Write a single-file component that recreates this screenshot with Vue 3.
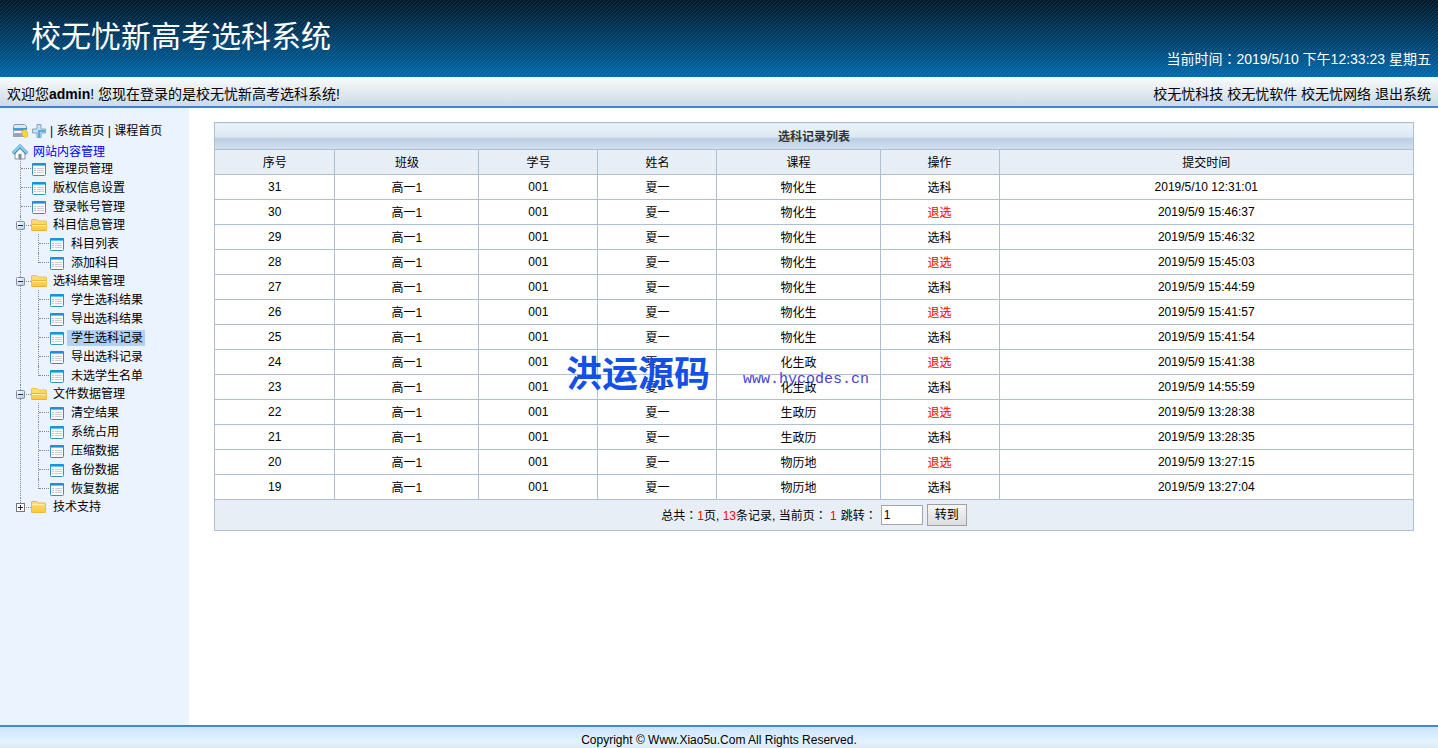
<script setup>
import { ref } from 'vue'

const pageNo = ref('1')

const tree = [
  { text: '管理员管理' },
  { text: '版权信息设置' },
  { text: '登录帐号管理' },
  { text: '科目信息管理', open: true, children: ['科目列表', '添加科目'] },
  { text: '选科结果管理', open: true, children: ['学生选科结果', '导出选科结果', '学生选科记录', '导出选科记录', '未选学生名单'] },
  { text: '文件数据管理', open: true, children: ['清空结果', '系统占用', '压缩数据', '备份数据', '恢复数据'] },
  { text: '技术支持', open: false, children: [] },
]
const selected = ref('学生选科记录')

const columns = ['序号', '班级', '学号', '姓名', '课程', '操作', '提交时间']
const rows = [
  [31, '物化生', '选科', '2019/5/10 12:31:01'],
  [30, '物化生', '退选', '2019/5/9 15:46:37'],
  [29, '物化生', '选科', '2019/5/9 15:46:32'],
  [28, '物化生', '退选', '2019/5/9 15:45:03'],
  [27, '物化生', '选科', '2019/5/9 15:44:59'],
  [26, '物化生', '退选', '2019/5/9 15:41:57'],
  [25, '物化生', '选科', '2019/5/9 15:41:54'],
  [24, '化生政', '退选', '2019/5/9 15:41:38'],
  [23, '化生政', '选科', '2019/5/9 14:55:59'],
  [22, '生政历', '退选', '2019/5/9 13:28:38'],
  [21, '生政历', '选科', '2019/5/9 13:28:35'],
  [20, '物历地', '退选', '2019/5/9 13:27:15'],
  [19, '物历地', '选科', '2019/5/9 13:27:04'],
]
</script>

<template>
  <div class="page">
    <svg class="defs" width="0" height="0" aria-hidden="true">
      <defs>
        <linearGradient id="gFolder" x1="0" y1="0" x2="0" y2="1">
          <stop offset="0" stop-color="#ffe27a" />
          <stop offset="1" stop-color="#fbc83c" />
        </linearGradient>
        <linearGradient id="gBox" x1="0" y1="0" x2="1" y2="1">
          <stop offset="0" stop-color="#ffffff" />
          <stop offset="1" stop-color="#b9c4d6" />
        </linearGradient>
        <symbol id="iPage" viewBox="0 0 16 16">
          <rect x="1.5" y="2.5" width="13" height="12" rx="1" fill="#fbfdfe" stroke="#3b8fb4" />
          <path d="M1 4V3q0-1 1-1h12q1 0 1 1v2H1z" fill="#1f8fd6" />
          <path d="M2 4.500h12" stroke="#5cc8f6" />
          <path d="M3 7.500h2M3 9.500h2M3 11.500h2" stroke="#b9c6dc" />
          <path d="M6 7.500h7M6 9.500h7M6 11.500h7" stroke="#cfcbd0" />
        </symbol>
        <symbol id="iFolderOpen" viewBox="0 0 16 16">
          <path d="M.5 3q0-.5.5-.5h5l1.500 1.500H15q.5 0 .5.5v9H.5z" fill="url(#gFolder)" stroke="#f0c24a" />
          <path d="M1 8.500h14" stroke="#fff0ae" />
          <path d="M1 7.500h14" stroke="#eab83a" />
          <path d="M1 13.500h14" stroke="#eaae38" />
        </symbol>
        <symbol id="iFolder" viewBox="0 0 16 16">
          <path d="M.5 3q0-.5.5-.5h5l1.500 1.500H14q.5 0 .5.5v9H.5z" fill="url(#gFolder)" stroke="#f0b848" />
          <path d="M1.500 5.500h12" stroke="#fff0ae" />
        </symbol>
      </defs>
    </svg>

    <header class="banner">
      <h1>校无忧新高考选科系统</h1>
      <p class="clock">当前时间<span class="mid">：</span>2019/5/10 下午12:33:23 星期五</p>
    </header>

    <div class="userbar">
      <p>欢迎您<b>admin</b>! 您现在登录的是校无忧新高考选科系统!</p>
      <nav>
        <a href="#">校无忧科技</a> <a href="#">校无忧软件</a> <a href="#">校无忧网络</a> <a href="#">退出系统</a>
      </nav>
    </div>

    <div class="body">
      <aside>
        <div class="tools">
          <svg width="16" height="16" viewBox="0 0 16 16" aria-hidden="true">
            <path d="M2.500 1.500h10l2 2v3h-13v-3z" fill="#dbe9f5" stroke="#7f9ab0" />
            <path d="M1 5h14v2H1z" fill="#3aa0e0" />
            <path d="M1.500 7.500h12v3h-12z" fill="#f4f6f8" stroke="#9aa6b2" />
            <path d="M1 11h11v3H1z" fill="#98a5b2" />
            <path d="M10 8l3-1.500L15.500 9v4.500l-3 1L10 12z" fill="#f8d83a" stroke="#d9ab2a" stroke-width=".6" />
          </svg>
          <svg width="16" height="16" viewBox="0 0 16 16" aria-hidden="true">
            <path d="M6 1.500h4V6h4.500v4H10v4.500H6V10H1.500V6H6z" fill="#c4e2f5" stroke="#8aa5b9" />
            <path d="M8 7v7M8 8h6" stroke="#4eb0e6" stroke-width="2" />
          </svg>
          <span>| <a href="#">系统首页</a> | <a href="#">课程首页</a></span>
        </div>
        <div class="root">
          <svg width="16" height="16" viewBox="0 0 16 16" aria-hidden="true">
            <path d="M3 8.500V15h10V8.500L8 4z" fill="#f7f9fb" stroke="#8795a3" />
            <path d="M6.500 15v-5h3v5z" fill="#7f8b98" />
            <path d="M1 9.500L8 2.500l7 7" fill="none" stroke="#4d7896" stroke-width="3.400" />
            <path d="M1 9L8 2l7 7" fill="none" stroke="#7fd0f6" stroke-width="2.400" />
          </svg>
          <a href="#">网站内容管理</a>
        </div>
        <ul class="tree">
          <li v-for="n in tree" :key="n.text">
            <div class="node" :class="{ folder: n.children }">
              <button v-if="n.children" class="toggle" type="button" :aria-label="n.text">
                <svg width="9" height="9" viewBox="0 0 9 9" aria-hidden="true">
                  <rect x=".5" y=".5" width="8" height="8" :rx="n.open ? 1 : 0" :fill="n.open ? 'url(#gBox)' : '#fff'" :stroke="n.open ? '#7d8ca6' : '#777'" />
                  <path :d="n.open ? 'M2 4.500h5' : 'M2 4.500h5M4.500 2v5'" stroke="#1c2c50" />
                </svg>
              </button>
              <svg class="icon" width="16" height="16" aria-hidden="true">
                <use :href="!n.children ? '#iPage' : n.open ? '#iFolderOpen' : '#iFolder'" />
              </svg>
              <a href="#">{{ n.text }}</a>
            </div>
            <ul v-if="n.open">
              <li v-for="c in n.children" :key="c">
                <div class="node">
                  <svg class="icon" width="16" height="16" aria-hidden="true"><use href="#iPage" /></svg>
                  <a href="#" :class="{ on: c === selected }">{{ c }}</a>
                </div>
              </li>
            </ul>
          </li>
        </ul>
      </aside>

      <main>
        <table>
          <colgroup>
            <col class="w-id"><col class="w-class"><col class="w-std"><col class="w-std"><col class="w-course"><col class="w-std"><col>
          </colgroup>
          <thead>
            <tr class="title"><th colspan="7">选科记录列表</th></tr>
            <tr class="heads"><th v-for="c in columns" :key="c" scope="col">{{ c }}</th></tr>
          </thead>
          <tbody>
            <tr v-for="r in rows" :key="r[0]">
              <td>{{ r[0] }}</td>
              <td class="cjk">高一1</td>
              <td>001</td>
              <td class="cjk">夏一</td>
              <td class="cjk">{{ r[1] }}</td>
              <td class="cjk" :class="{ red: r[2] === '退选' }">{{ r[2] }}</td>
              <td>{{ r[3] }}</td>
            </tr>
          </tbody>
          <tfoot>
            <tr>
              <td colspan="7">
                <form class="pager" @submit.prevent>
                  <span>总共<span class="mid">：</span><span class="red">1</span>页, <span class="red">13</span>条记录, 当前页<span class="mid">：</span> <span class="red">1</span></span>
                  <label for="jump">跳转<span class="mid">：</span></label>
                  <input id="jump" v-model="pageNo" type="text">
                  <button type="submit">转到</button>
                </form>
              </td>
            </tr>
          </tfoot>
        </table>
        <div class="mark"><strong>洪运源码</strong><span>www.hycodes.cn</span></div>
      </main>
    </div>

    <footer>Copyright © Www.Xiao5u.Com All Rights Reserved.</footer>
  </div>
</template>

<style>
body { margin: 0; }
</style>

<style scoped>
.page {
  display: flex;
  flex-direction: column;
  min-height: 100vh;
  font: 12px/18px "Liberation Sans", "Noto Sans CJK SC", sans-serif;
  color: #000;
  background: #fff;
}
.defs { position: absolute; }
h1, p, ul { margin: 0; padding: 0; }
ul { list-style: none; }
a { color: inherit; text-decoration: none; }
.mid { font-family: "Noto Sans CJK TC", sans-serif; }
.red { color: #f00; }

.banner {
  display: flex;
  justify-content: space-between;
  height: 77px;
  box-sizing: border-box;
  padding: 0 7px 0 31px;
  color: #fff;
  background:
    linear-gradient(135deg, rgba(255, 255, 255, .1) 0 12.5%, transparent 12.5% 50%, rgba(255, 255, 255, .1) 50% 62.5%, transparent 62.5%) 0 0 / 4px 4px,
    linear-gradient(#00182a, #003e68 50%, #0069ac);
}
h1 { font-size: 30px; line-height: 36px; font-weight: 400; padding-top: 19px; }
.clock { font-size: 14px; line-height: 20px; padding-top: 48px; }

.userbar {
  display: flex;
  justify-content: space-between;
  padding: 7px 7px 2px;
  font-size: 14px;
  line-height: 20px;
  background: linear-gradient(#fafcfc, #e2eaf0 50%, #cbdbe8);
  border-bottom: 2px solid #4383c8;
}

.body { display: flex; flex: 1; }
aside {
  width: 189px;
  flex: none;
  box-sizing: border-box;
  padding: 13px 0 0 12px;
  background: #eaf3ff;
}
.tools { display: flex; align-items: center; gap: 3px; height: 20px; }
.root { display: flex; align-items: center; gap: 5px; height: 22px; color: #00f; }
.tree { margin: -4px 0 0 3px; }
.tree > li { position: relative; }
.tree > li::before {
  content: "";
  position: absolute;
  left: 5px;
  top: 0;
  bottom: 0;
  border-left: 1px dotted #888;
}
.tree > li:last-child::before { bottom: 9px; }
.node { display: flex; align-items: center; height: 19px; position: relative; padding-left: 16px; }
.node.folder { height: 18px; padding-left: 0; }
.node::before {
  content: "";
  position: absolute;
  left: 6px;
  width: 10px;
  top: 9px;
  border-top: 1px dotted #888;
}
.toggle {
  display: flex;
  position: relative;
  width: 16px;
  padding: 0 0 0 1px;
  border: 0;
  background: none;
}
.node a { margin-left: 2px; padding: 0 2px 0 4px; line-height: 16px; }
.node a.on { background: #b0d0f4; }
.tree ul { margin-left: 18px; }
.tree ul li { position: relative; }
.tree ul li::before {
  content: "";
  position: absolute;
  left: 5px;
  top: 0;
  bottom: 0;
  border-left: 1px dotted #888;
}
.tree ul li:last-child::before { bottom: 9px; }

main { position: relative; flex: 1; padding: 14px 24px 24px 25px; }
table { width: 100%; table-layout: fixed; border-collapse: collapse; }
.w-id { width: 10.05%; }
.w-class { width: 12%; }
.w-std { width: 9.93%; }
.w-course { width: 13.6%; }
th, td { height: 24px; padding: 0; border: 1px solid #adbfd3; text-align: center; font-weight: 400; }
.heads th, td.cjk { height: 22px; padding-top: 2px; }
.title th {
  height: 24px;
  padding-top: 2px;
  font-weight: 700;
  color: #333;
  background: linear-gradient(#eaf3fa, #dbe8f2 55%, #bacde4 56%, #d3e0f0);
}
.heads th, tfoot td { background: #e8eef6; }
.pager { display: flex; align-items: center; justify-content: center; gap: 4px; height: 30px; }
.pager input {
  width: 42px;
  height: 20px;
  box-sizing: border-box;
  padding: 0 2px;
  border: 1px solid #a5a5a5;
  background: #fff;
  font: inherit;
}
.pager button {
  width: 40px;
  height: 22px;
  padding: 0;
  border: 1px solid #a0a0a0;
  background: linear-gradient(#f6f6f6, #dcdcdc);
  font: inherit;
  line-height: 18px;
}
.mark {
  position: absolute;
  left: 377px;
  top: 247px;
  display: flex;
  align-items: center;
  gap: 33px;
  pointer-events: none;
}
.mark strong { font-size: 36px; line-height: 40px; font-weight: 700; color: #1450e8; }
.mark span { font: 15px/18px "Liberation Mono", monospace; color: #4644d4; padding-top: 9px; }

footer {
  padding: 4px 0 0;
  height: 17px;
  line-height: 18px;
  text-align: center;
  border-top: 2px solid #4a88b8;
  background: linear-gradient(#cbe4fd, #e4f2fc 70%, #dceaf8);
}
</style>
